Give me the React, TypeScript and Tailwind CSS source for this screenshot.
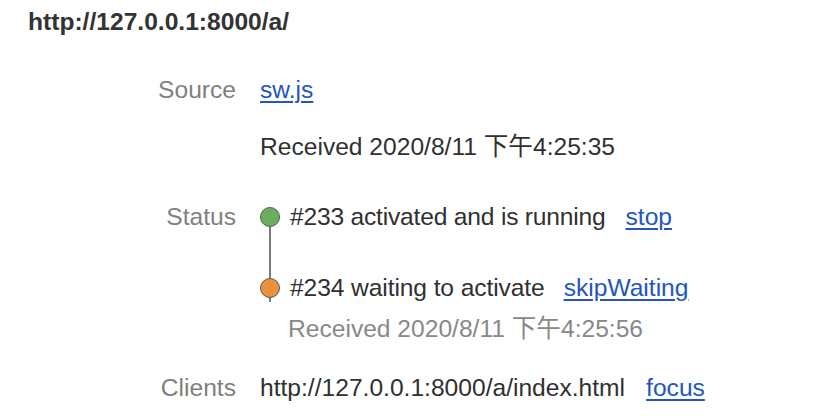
import React from "react";

function Dot({ color, top, bottom }: { color: string; top?: boolean; bottom?: boolean }) {
  return (
    <div className="flex h-full w-5 flex-col items-center">
      <div className={`h-[4px] w-[2px] ${top ? "bg-[#7b7b7b]" : ""}`} />
      <div className={`size-5 shrink-0 rounded-full border-[1.5px] border-[#585858] ${color}`} />
      <div className={`h-[4px] w-[2px] ${bottom ? "bg-[#7b7b7b]" : ""}`} />
    </div>
  );
}

function Link({ children, className = "" }: { children: React.ReactNode; className?: string }) {
  return (
    <a href="#" className={`text-[#2356c0] underline underline-offset-[3px] decoration-[1.5px] ${className}`}>
      {children}
    </a>
  );
}

export default function App() {
  return (
    <main className="min-h-[420px] w-[814px] bg-white pl-[28px] font-['Liberation_Sans','Noto_Sans_CJK_SC',sans-serif] text-[24.6px] text-[#303030]">
      <h1 className="h-[44px] font-bold leading-[44px] text-[#333]">http://127.0.0.1:8000/a/</h1>

      <div className="grid grid-cols-[208px_1fr] gap-x-[24px] leading-[28px]">
        {/* Source */}
        <div className="mt-[32px] text-right text-[#808080]">Source</div>
        <div className="mt-[32px]">
          <Link>sw.js</Link>
        </div>
        <div />
        <div className="mt-[29px]">Received 2020/8/11 下午4:25:35</div>

        {/* Status */}
        <div className="mt-[42px] text-right text-[#808080]">Status</div>
        <div className="mt-[42px] flex flex-col">
          <div className="flex h-[28px] items-center">
            <Dot color="bg-[#6aae5e]" bottom />
            <span className="ml-[10px] tracking-[-0.2px]">#233 activated and is running</span>
            <Link className="ml-[20px]">stop</Link>
          </div>
          <div className="flex h-[43px] w-5 justify-center">
            <div className="w-[2px] bg-[#7b7b7b]" />
          </div>
          <div className="flex h-[28px] items-center">
            <Dot color="bg-[#e8923c]" top bottom />
            <span className="ml-[10px] tracking-[-0.1px]">#234 waiting to activate</span>
            <Link className="ml-[19px]">skipWaiting</Link>
          </div>
          <div className="mt-[13px] pl-[28px] text-[#888]">Received 2020/8/11 下午4:25:56</div>
        </div>

        {/* Clients */}
        <div className="mt-[31px] text-right text-[#808080]">Clients</div>
        <div className="mt-[31px]">
          http://127.0.0.1:8000/a/index.html
          <Link className="ml-[21px]">focus</Link>
        </div>
      </div>
    </main>
  );
}
